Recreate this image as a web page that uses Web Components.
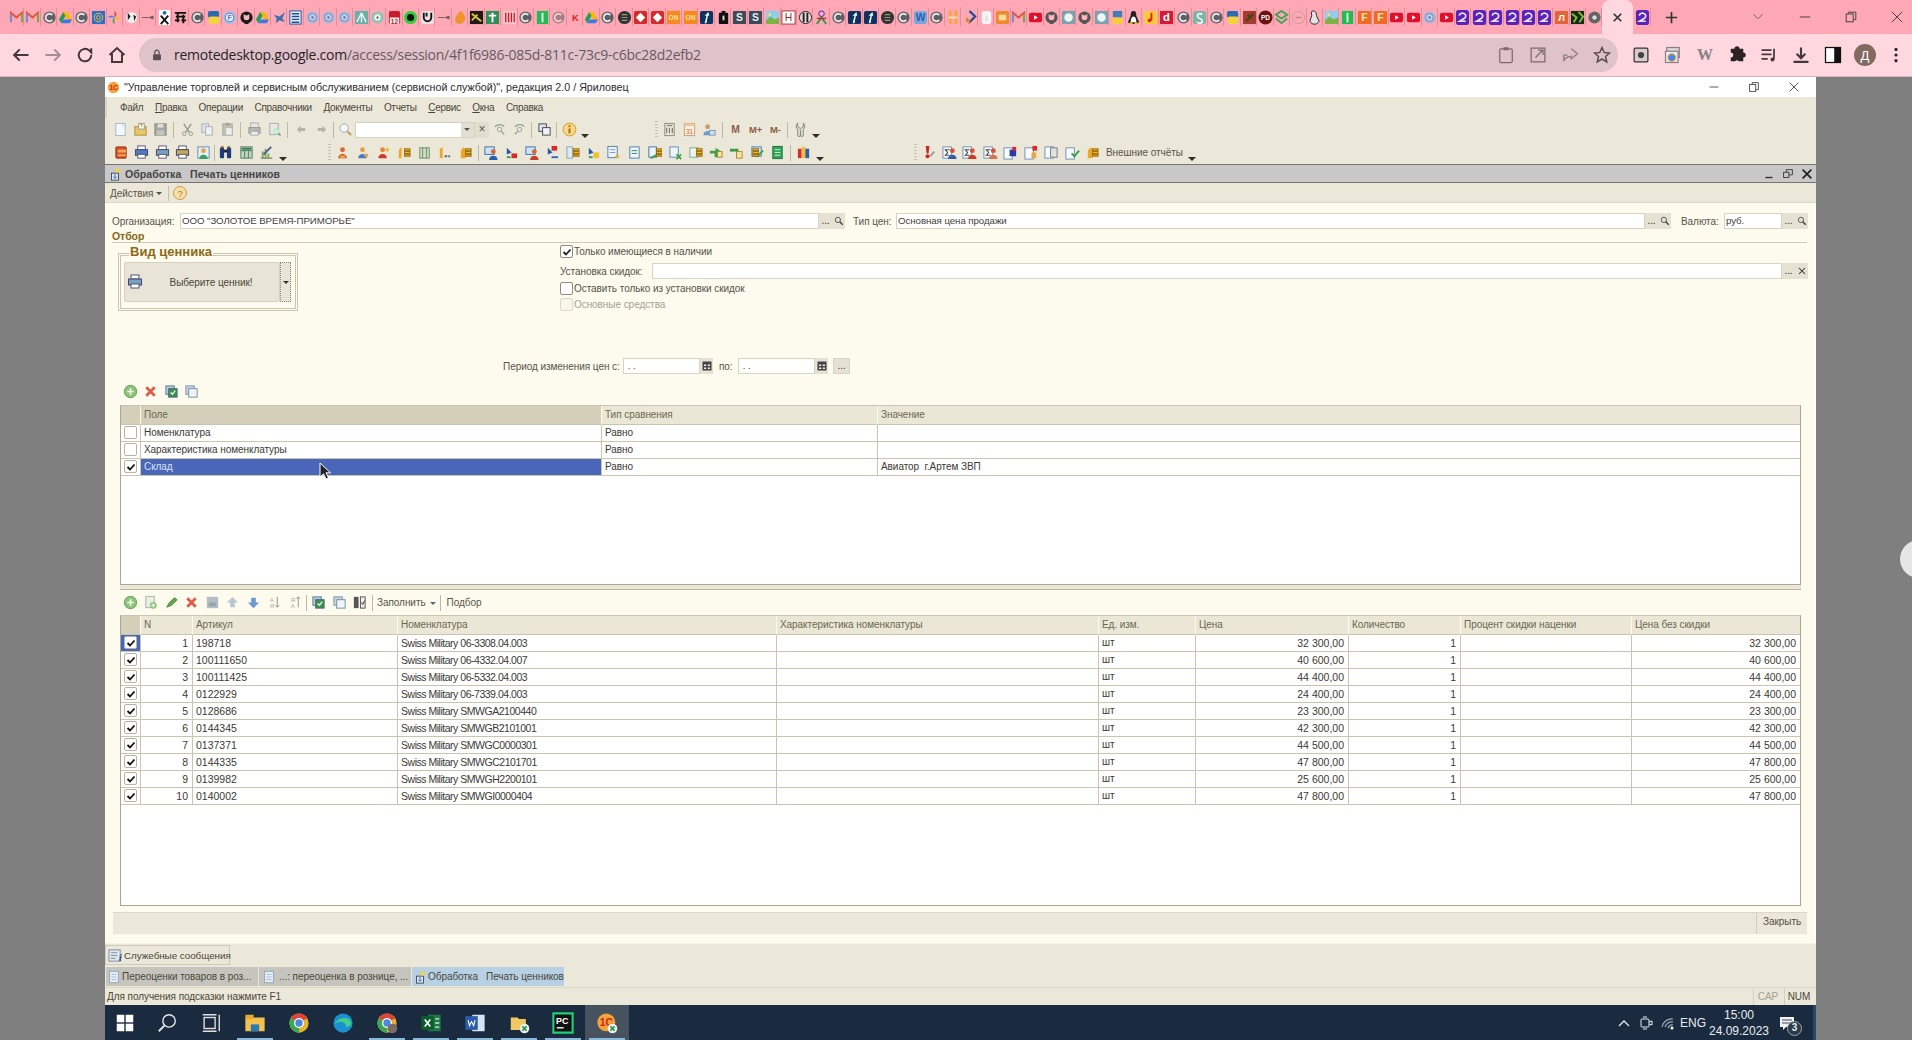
<!doctype html>
<html lang="ru">
<head>
<meta charset="utf-8">
<title>Печать ценников</title>
<style>
  html, body { margin: 0; width: 1912px; height: 1040px; overflow: hidden; background: #7f7f7f; }
  body { display: flex; flex-direction: column; font-family: "Liberation Sans", Arial, sans-serif; }
  remote-screen { flex: 1; min-height: 0; }
</style>
</head>
<body>
<browser-tabs></browser-tabs>
<browser-bar url="remotedesktop.google.com/access/session/4f1f6986-085d-811c-73c9-c6bc28d2efb2"></browser-bar>
<remote-screen>
  <one-app>
    <window-title slot="top" text='"Управление торговлей и сервисным обслуживанием (сервисной службой)", редакция 2.0 / Яриловец'></window-title>
    <one-menubar slot="top" items="Файл,&amp;Правка,Операции,Справочники,Документы,Отчеты,&amp;Сервис,&amp;Окна,Справка"></one-menubar>
    <one-toolbar slot="top" h="23" pad="5" cell="20" items="new open save sep7 cut copy paste sep7 print prev sep7 undo redo sep4 find input xbtn back fwd sep5 wins sep5 info arrow gap62 handle calc cal32 usr sep6 m mp mm sep5 wrench arrow"></one-toolbar>
    <one-toolbar slot="top" h="23" pad="6" items="book pr1 pr2 pr3 frame sep2 bino tbl chart arrow gap37 handle fa fb fc cs1 cs2 cs3 cs4 sep5 dp1 dp2 dp3 dp4 cs5 dp5 doc1 doc2 dp6 dp7 cs6 doc3 doc4 doc5 grn sep5 multi arrow gap87 handle alert sg1 sg2 sg3 sg4 sg5 sg6 sg7 cs4 txt:Внешние_отчёты arrow"></one-toolbar>
    <sub-title slot="top" text="Обработка   Печать ценников"></sub-title>
    <actions-bar slot="top"></actions-bar>

    <price-form>
      <form-row h="16" top="10">
        <one-field label="Организация:" lw="68" w="639" value='ООО "ЗОЛОТОЕ ВРЕМЯ-ПРИМОРЬЕ"' btns="dots,search"></one-field>
        <one-field label="Тип цен:" lw="43" w="749" value="Основная цена продажи" btns="dots,search" style="margin-left:8px"></one-field>
        <one-field label="Валюта:" lw="43" w="58" value="руб." btns="dots,search" style="margin-left:10px"></one-field>
      </form-row>
      <section-head text="Отбор"></section-head>
      <filter-block>
        <price-kind slot="left"></price-kind>
        <one-check slot="right" checked label="Только имеющиеся в наличии" style="height:16px"></one-check>
        <one-field slot="right" label="Установка скидок:" lw="92" w="1130" btns="dots,x" style="height:16px;margin-top:4px"></one-field>
        <one-check slot="right" label="Оставить только из установки скидок" style="height:16px;margin-top:1px"></one-check>
        <one-check slot="right" disabled label="Основные средства" style="height:16px"></one-check>
      </filter-block>
      <form-row h="16" left="391">
        <one-field label="Период изменения цен с:" lw="120" w="77" value=" . ." btns="cal"></one-field>
        <one-field label="по:" lw="19" w="77" value=" . ." btns="cal" style="margin-left:6px"></one-field>
        <one-field w="0" btns="wide" style="margin-left:5px"></one-field>
      </form-row>
      <one-toolbar h="31" pad="7" top="4" items="plus del chk unchk"></one-toolbar>
      <one-grid src="filter" h="180"></one-grid>
      <grid-split></grid-split>
      <one-toolbar h="25" pad="7" top="0" items="plus addc pen del savg up dn az za sep4 chk unchk togl sep4 txt:Заполнить tiny sep6 txt:Подбор"></one-toolbar>
      <one-grid src="goods" h="291"></one-grid>
      <form-footer></form-footer>
    </price-form>

    <one-dock slot="bottom"></one-dock>
    <win-taskbar slot="bottom"></win-taskbar>
  </one-app>
</remote-screen>
<mouse-cursor></mouse-cursor>
<session-handle></session-handle>

<script>
// helpers for small pictures
const r = (x, y, w, h, f, s = 'none', rx = 0) => `<rect x="${x}" y="${y}" width="${w}" height="${h}" fill="${f}" stroke="${s}" rx="${rx}"/>`;
const c = (x, y, rad, f, s = 'none') => `<circle cx="${x}" cy="${y}" r="${rad}" fill="${f}" stroke="${s}"/>`;
const p = (d, f = 'none', s = 'none', w = 1) => `<path d="${d}" fill="${f}" stroke="${s}" stroke-width="${w}"/>`;
const svg = (inner, size = 16, vb = 16) => `<svg width="${size}" height="${size}" viewBox="0 0 ${vb} ${vb}" style="display:block;flex:none">${inner}</svg>`;
const letter = (t, f, size = 11, y = 12, w = 700) => `<text x="8" y="${y}" font-size="${size}" font-weight="${w}" text-anchor="middle" fill="${f}" font-family="Liberation Sans">${t}</text>`;

// favicons of the tab strip
const sq = (bg, fg, t) => r(1, 1, 14, 14, bg, 'none', 1) + letter(t, fg);
const swirl = (o = 1) => `<g opacity="${o}">${c(8, 8, 6.5, '#5c5f63')}${p('M11 5.5A4 4 0 1 0 11 10.5', 'none', '#e6e0e0', 2)}</g>`;
const drive = p('M5.5 2h5l4.5 8h-5z', '#f6b900') + p('M5.5 2 1 10l2.5 4 4.5-8z', '#1f9d55') + p('M3.5 14h9l2.5-4H6z', '#3b78e7');
const gh = (col) => c(8, 8, 6.5, col) + p('M5 4l1.5 1.5h3L11 4v4a3 3 0 0 1-6 0z', '#ffb3bd') + r(6, 11, 4, 4, col);
const ring = c(8, 8, 6.5, '#a6b6da') + c(8, 8, 4, '#c9d4ea', '#6f86be') + c(8, 8, 1.5, '#6f86be');
const tube = r(1, 3, 14, 10, '#e0102a', 'none', 2) + p('M6.5 5.5v5l4-2.5z', '#fff');
const purple = r(1, 0, 14, 16, '#5a22b8', 'none', 3) + p('M4.5 6a3.5 3 0 1 1 6 2.5L5 12h6.5', 'none', '#e9e2ff', 1.8);
const burst = r(1, 1, 14, 14, '#7aa3ad') + c(8, 8, 4.5, '#eef6f6');
const FAV = {
  g: p('M2 13V3l6 5 6-5v10', 'none', '#e8503a', 2) + p('M2 13V4', 'none', '#6f8fe0', 2) + p('M14 13V4', 'none', '#6ab04c', 2),
  c: swirl(), cl: swirl(.55), d: drive,
  at: r(1, 1, 14, 14, '#2f6fc4') + c(8, 8, 4.5, 'none', '#f2c230') + c(8, 8, 2, 'none', '#f2c230'),
  pw: p('M8 8V1a4 4 0 0 1 0 7', '#ea4335') + p('M8 8h7a4 4 0 0 1-7 0', '#fbbc05') + p('M8 8v7a4 4 0 0 1 0-7', '#34a853') + p('M8 8H1a4 4 0 0 1 7 0', '#4285f4'),
  cow: c(8, 8, 6, '#eee') + p('M4 3l3 4-3 4zM10 5l3 2-2 5z', '#222'),
  dash: p('M2 8h8l4-1.5v3L10 8', '#7d5d57', '#7d5d57'),
  x: r(2, 0, 12, 16, '#fff') + p('M4 6l8 9M12 6l-8 9', 'none', '#111', 2) + c(8, 3, 2, '#2a62b8'),
  se: p('M2 3h12M3 7h10M2 11h5M9 11h5M5 3v10M11 5v9', 'none', '#111', 2),
  py: r(2, 1, 12, 7, '#2c6bb0', 'none', 2) + r(3, 7, 11, 8, '#f5d33c', 'none', 2),
  fb: c(8, 8, 7, '#a9bde4') + c(8, 8, 4.6, '#eaf0fb', '#4f73c2') + letter('F', '#4f73c2', 7, 10.5),
  gh: gh('#1a1a1a'), gx: gh('#555'),
  bird: p('M2 5l6 2 6-5-3 7 3 4-6-2-4 3 1-5z', '#3c6fb0'),
  st: r(2, 1, 12, 14, '#e9eef7', '#1c4f9c') + p('M4 4h8M4 7h8M4 10h8M4 13h8', 'none', '#1c4f9c', 1.5),
  lb: ring,
  shell: r(1, 1, 14, 14, '#68b0a5') + p('M8 3 3 13M8 3v10M8 3l5 10', 'none', '#e8f5f2', 1.5),
  gg: c(8, 8, 6.5, '#8ec3b3') + c(8, 8, 3.5, '#eee') + c(8, 8, 1, '#333'),
  r12: r(2, 1, 12, 14, '#c81e2c', 'none', 2) + r(3, 8, 10, 7, '#eee') + letter('12', '#c81e2c', 7, 14.5),
  gb: c(8, 8, 7, '#31d03a') + c(8, 8, 3.8, '#111'),
  u: r(1, 1, 14, 14, '#f0dfe0', 'none', 3) + p('M4 3v5a4 4 0 0 0 8 0V3M7 3v4', 'none', '#111', 2),
  ob: p('M8 1c5 3 6 8 4 11s-7 4-9 1 1-9 5-12z', '#f0932b'),
  by: r(1, 1, 14, 14, '#1c1a16') + p('M3 4l10 8M3 11l6-6', 'none', '#e6c13c', 2),
  gc: r(1, 1, 14, 14, '#2f8f57') + p('M8 3v10M4 6h8', 'none', '#fff', 2),
  r10: r(1, 1, 14, 14, '#ffc4ca') + p('M4 3v10M7 3v10M10 3v10M13 3v10', 'none', '#b9202b', 1.4),
  gbar: r(2, 1, 12, 14, '#22bb55') + r(7, 3, 2, 10, '#e8ffe8'),
  k: letter('K', '#d8202c', 10, 12),
  br: c(8, 8, 7, '#333') + p('M5 5h6M5 8h6M5 11h6', 'none', '#8f9a72', 1.3),
  rd: r(1, 1, 14, 14, '#d32b2b', 'none', 2) + p('M8 3l5 5-5 5-5-5z', '#fff'),
  on: r(1, 1, 14, 14, '#f68a1e') + letter('ON', '#ffe1a8', 7, 10.5),
  fu: r(1, 1, 14, 14, '#14305f', 'none', 2) + p('M6 14l2-8H6l4-4 1 4H9.5L8 14z', '#dff'),
  bat: r(3, 3, 10, 12, '#111', 'none', 1) + r(6, 1, 4, 3, '#111') + r(7, 6, 2, 5, '#ddd'),
  s: sq('#3c4a59', '#e8e8e8', 'S'),
  img: r(1, 1, 14, 14, '#8ecdf0') + p('M1 11l5-4 4 3 5-2v7H1z', '#7cb342') + c(5, 5, 1.5, '#ffe066'),
  h: r(1, 1, 14, 14, '#fff', '#a83232') + letter('H', '#a01f2a', 11, 12, 400),
  wr: c(8, 8, 6.5, '#e4d8da', '#222') + p('M6 3v10M10 3v10', 'none', '#222', 2),
  per: c(8, 4, 3, 'none', '#2a2ab8') + p('M3 15l5-7 5 7', 'none', '#1e9e4a', 2) + p('M3 9h10', 'none', '#d8202c', 1.5),
  wb: r(1, 1, 14, 14, '#79a7dd', 'none', 3) + letter('W', '#2c5fa8', 11, 12),
  ol: r(3, 1, 3, 14, '#f9a33c') + r(9, 1, 3, 14, '#f9a33c') + r(3, 7, 9, 2, '#ffe2bd'),
  dia: p('M8 1l6 6-6 6-3-3', 'none', '#1d4f8f', 2.4) + p('M5 8l3 6', 'none', '#f08a24', 2.4),
  wi: r(3, 1, 10, 14, '#f6f4f4', 'none', 3) + r(7, 6, 2, 6, '#ddd'),
  os: r(1, 1, 14, 14, '#ee8a2a', 'none', 2) + r(4, 5, 8, 6, '#ffd7a0'),
  yt: tube, tb: burst,
  py2: r(3, 1, 10, 7, '#3f7dbb') + r(3, 8, 10, 7, '#f4cd3a'),
  lx: p('M8 1c3 0 3 3 3 5l3 7-3 2H5l-3-2 3-7c0-2 0-5 3-5z', '#222') + p('M8 7c2 0 3 3 3 6H5c0-3 1-6 3-6z', '#fff') + r(4, 13, 3, 2, '#f0b429') + r(9, 13, 3, 2, '#f0b429'),
  nt: r(1, 1, 14, 14, '#ffc933', 'none', 3) + p('M9 3v8', 'none', '#d8202c', 2) + c(7, 11, 2, '#d8202c'),
  dr: r(1, 1, 14, 14, '#d31c34') + letter('d', '#fff', 12),
  gs: r(1, 1, 14, 14, '#7fb3a5', 'none', 3) + p('M11 5C9 3 5 4 6 7s5 2 5 5-4 2-6 1', 'none', '#eefaf5', 1.7),
  dk: r(1, 1, 14, 14, '#a33b30') + p('M4 12l8-8M6 5l4 4', 'none', '#441', 2),
  pdf: c(8, 8, 7.5, '#6d1111') + letter('PD', '#fff', 7, 10.5),
  gl: p('M8 1l6 4-6 4-6-4z', 'none', '#3aa655', 2) + p('M2 9l6 5 6-5', 'none', '#3aa655', 2),
  cd: c(8, 8, 6.5, 'none', '#c99') + p('M5 8h6', 'none', '#b88', 1.5),
  pg: p('M6 1c4 0 4 3 4 5l3 6-3 3H6L3 12l2-6c0-2-1-5 1-5z', '#e6e3e3', '#222'),
  f: r(1, 1, 14, 14, '#f16a1f', 'none', 1) + letter('F', '#ffe2c4'),
  p: purple,
  l: r(1, 1, 14, 14, '#e2653a', 'none', 1) + letter('Л', '#ffe', 10),
  gk: r(1, 1, 14, 14, '#1b2a12') + p('M2 4l5 4-3 5M9 2l5 5-4 6', 'none', '#7bc043', 2),
  chr: c(8, 8, 6.5, '#666') + c(8, 8, 3, '#ddd', '#444')
};
const TAB_ICONS = ('g g c d c at pw cow dash x se c py fb gh d bird st lb lb lb shell gg r12 gb u dash ob by gc r10 c gbar cl k d c br ' +
  'rd rd on on fu bat s s img h wr per c fu fu br c wb c ol dia wi os g yt gx tb gx tb py2 lx nt dr c gs c py dk pdf ' +
  'gl cd pg img gbar f f yt yt lb yt p p p p p p l gk chr').split(' ');

// 1C toolbar pictures
const person = (hd, body, x = 8, y = 5) => c(x, y, 2.6, hd) + p(`M${x - 4.5} ${y + 9}c0-6 9-6 9 0z`, body);
const coins = (x = 9) => r(x, 10, 6, 2, '#e0a51d', '#9c6d0c') + r(x, 7, 6, 2, '#f0bd35', '#9c6d0c') + r(x, 4, 6, 2, '#f0bd35', '#9c6d0c');
const paper = (x = 2, y = 1) => r(x, y, 9, 12, '#f8fbff', '#6f8fb8');
const sigma = (col) => paper(1, 2) + p('M8 5H3.5L6 8l-2.5 3H8', 'none', '#444', 1.1) + person('#d8503a', col, 11, 6);
const printer = (bd) => r(4, 1, 8, 4, '#fff', '#557') + r(1.5, 5, 13, 6, bd, '#446') + r(4, 10, 8, 4, '#fff', '#557');
const TB = {
  new: r(3, 1.5, 10, 13, '#f4f8fc', '#a3b5c4') + p('M10 1.5l3 3h-3z', '#cfdbe6'),
  open: r(2, 5, 12, 9, '#e9c86a', '#b08a2c') + r(6, 1.5, 6, 6, '#fff', '#999') + p('M9 5V2m-1.5 1.5L9 2l1.5 1.5', 'none', '#c9962a'),
  save: r(2, 2, 12, 12, '#a8a8a2', '#88887f') + r(5, 2, 6, 4, '#dedfd8') + r(4, 9, 8, 5, '#c4c4be'),
  cut: p('M4 2l6 9M12 2l-6 9', 'none', '#9a9a94', 1.6) + c(4.5, 12.5, 2, 'none', '#9a9a94') + c(11.5, 12.5, 2, 'none', '#9a9a94'),
  copy: r(2, 2, 7, 9, '#dfe6ea', '#a5adb3') + r(6, 5, 7, 9, '#eef2f4', '#a5adb3'),
  paste: r(3, 2, 10, 12, '#c6c4b8', '#a5a398') + r(6, 1, 4, 3, '#a5a398') + r(6, 6, 7, 8, '#eef0ee', '#b5b5ae'),
  print: r(4, 1, 8, 5, '#e8e8e4', '#aaa') + r(2, 6, 12, 6, '#b8b8b2', '#999') + r(4, 10, 8, 4, '#eee', '#aaa'),
  prev: r(3, 1.5, 9, 12, '#e9e9e6', '#aaa') + c(10, 10, 3, '#d9e6ee', '#8ea') + p('M12 12l2.5 2.5', 'none', '#888', 1.5),
  undo: p('M3 8l4-4v2.5h5v3H7V12z', '#b7b4a6'), redo: p('M13 8L9 4v2.5H4v3h5V12z', '#b7b4a6'),
  find: c(6.5, 6.5, 4.5, '#f2f6f8', '#9aa') + p('M10 10l4 4', 'none', '#c09a5a', 2),
  back: p('M3 5c3-3 8-3 10 0', 'none', '#8fa39a', 1.4) + c(8, 8, 2.4, 'none', '#8fa39a') + p('M10 10l3 3', 'none', '#8fa39a', 1.4),
  fwd: p('M3 5c3-3 8-3 10 0', 'none', '#8fa39a', 1.4) + c(8, 8, 2.4, 'none', '#8fa39a') + p('M6 10l-3 3', 'none', '#8fa39a', 1.4),
  wins: r(2, 2, 8, 8, '#dce5f0', '#445') + r(6, 6, 8, 8, '#eef3f8', '#445'),
  info: c(8, 8, 6.8, '#f6d989', '#d39a2c') + r(7, 7, 2, 5, '#a8650f') + r(7, 3.5, 2, 2, '#a8650f'),
  calc: r(3, 1.5, 10, 13, '#eee9d8', '#8a8a78') + p('M5 6v6M8 6v6M11 6v6', 'none', '#777', 1.2) + r(5, 3, 6, 1.5, '#888'),
  cal32: r(2.5, 1.5, 11, 13, '#fbf1e2', '#c99c66') + r(2.5, 1.5, 11, 3, '#e9c9a5') + `<text x="8" y="12.5" font-size="7" text-anchor="middle" fill="#c8642a" font-family="Liberation Sans">31</text>`,
  usr: person('#c7a06a', '#6a9cc8', 6, 5) + r(8, 9, 6, 5, '#cfe0ee', '#7a96b3'),
  m: letter('M', '#8d5d45', 11, 12), mp: letter('M+', '#8d5d45', 10, 12), mm: letter('M-', '#8d5d45', 10, 12),
  wrench: p('M5 1v4l3 2 3-2V1c2 2 2 5 0 7v6a1.5 1.5 0 0 1-3 0h0V9H8v5a1.5 1.5 0 0 1-3 0V8C3 6 3 3 5 1z', '#dcdcd0', '#888878'),
  book: r(2, 2, 11, 12, '#d9522b', '#8e2b12', 1) + r(4, 5, 9, 3, '#f2a65a') + r(4, 10, 9, 2, '#f2a65a'),
  pr1: printer('#4f7ac4'), pr2: printer('#7aa0c0'), pr3: printer('#c9a45a'),
  frame: r(2, 2, 12, 12, '#e7eff7', '#6a8db5') + person('#e6a04c', '#39a06b', 8, 6),
  bino: r(2, 3, 4.5, 11, '#1f3b78', 'none', 1) + r(9.5, 3, 4.5, 11, '#1f3b78', 'none', 1) + r(6, 5, 4, 3, '#223') + r(3, 1.5, 3, 2, '#7a4c2a') + r(10, 1.5, 3, 2, '#7a4c2a'),
  tbl: r(2, 2, 12, 12, '#bcd9c2', '#4d7a5d') + p('M2 6h12M6 6v8M10 6v8', 'none', '#4d7a5d') + r(3, 3, 10, 2, '#397c52'),
  chart: p('M2 14h12', 'none', '#555') + p('M4 14V7M7 14V4M10 14V9', 'none', '#7fa65a', 2) + p('M5 10l8-8', 'none', '#4a5a9a', 2),
  fa: person('#d8682f', '#d13a2a') + r(5, 11, 6, 3, '#e5a640'),
  fb: person('#e6a040', '#4a7ac0') + c(12, 11, 2, '#e5a640'),
  fc: person('#e58a2f', '#d13a2a', 7, 5) + c(12, 5, 2, '#f0bd35'),
  cs1: p('M3 14V5l3-3v12z', '#eea724') + coins(), cs2: r(3, 3, 10, 11, '#cfe0c8', '#6c8a60') + p('M6 3v11M10 3v11', 'none', '#6c8a60'),
  cs3: p('M3 14V4l3-2v12z', '#eea724') + r(8, 11, 3, 2, '#667') + r(12, 11, 2, 2, '#667'),
  cs4: p('M3 14V6l3-4 2 3v9z', '#eea724') + coins(8),
  cs5: r(2, 2, 6, 12, '#dfe8f0', '#8aa') + coins(),
  cs6: r(2, 3, 9, 10, '#eef4e8', '#7a9') + coins(),
  dp1: r(2, 2, 10, 8, '#cfe3f6', '#3c70b0') + person('#d8682f', '#2a5fb0', 11, 7),
  dp2: p('M3 3l5 5-5 2z', '#2458a8') + r(8, 9, 6, 5, '#d42b2b') + p('M3 13h4', 'none', '#3a9a4a', 2),
  dp3: r(2, 2, 10, 8, '#cfe3f6', '#3c70b0') + person('#d8682f', '#c8402a', 11, 7),
  dp4: r(7, 1, 6, 5, '#d42b2b') + p('M3 3l5 5-5 2z', '#2458a8') + p('M7 13h7', 'none', '#3a60c0', 2),
  dp5: p('M3 3l5 5-5 2z', '#2458a8') + r(8, 8, 6, 6, '#f2c12e') + p('M3 13h4', 'none', '#3a9a4a', 2),
  dp6: r(2, 2, 8, 11, '#eef4fa', '#3c70b0') + p('M4 14l9-5', 'none', '#3aa04a', 2) + coins(10),
  dp7: r(2, 2, 9, 11, '#eef4fa', '#5a8cc0') + p('M9 10l5 5M14 10l-5 5', 'none', '#3aa04a', 1.8),
  doc1: r(2, 1.5, 10, 12, '#eef4fa', '#4d80b5') + p('M4 5h6M4 8h6', 'none', '#7a9bc0') + c(12, 12, 2, '#ddb23a'),
  doc2: r(3, 2, 10, 12, '#eef4fa', '#4d80b5') + p('M5 6h6M5 9h6', 'none', '#2a8a4a'),
  doc3: p('M1 6h6V3l6 4v6H6V9H1z', '#3aa04a') + r(9, 7, 5, 6, '#f4e4a4', '#b08a2c'),
  doc4: p('M1 4h9v3H1z', '#3a9a4a') + r(8, 7, 6, 7, '#f4e4a4', '#b08a2c'),
  doc5: r(2, 2, 10, 10, '#cfe3f6', '#4d80b5') + p('M5 9l3 3 6-6', 'none', '#3aa04a', 1.8) + coins(3),
  grn: r(3, 1.5, 10, 13, '#35a55a', '#1c6f3b') + p('M5 5h6M5 8h6M5 11h6', 'none', '#bff0cf'),
  multi: r(2, 4, 4, 10, '#d42b2b') + r(6, 2, 4, 12, '#f0bd35') + r(10, 4, 4, 10, '#2c5fa8'),
  alert: p('M5 1h4l-1 8H6z', '#c62a22') + c(7, 12, 2.2, '#c62a22') + p('M10 12l4-5', 'none', '#999', 2),
  sg1: sigma('#2c5fa8'), sg2: sigma('#c8402a'), sg3: sigma('#d8744a'),
  sg4: paper(1, 3) + r(7, 5, 7, 7, '#2c3aa8') + r(10, 2, 4, 4, '#d42b2b'),
  sg5: paper(1, 3) + r(9, 1, 5, 5, '#d42b2b') + r(8, 8, 5, 6, '#e5a640'),
  sg6: paper(1, 2) + r(7, 3, 7, 10, '#dde5dd', '#778'),
  sg7: paper(1, 3) + p('M7 9l3 3 5-6', 'none', '#3aa04a', 2),
  plus: c(8, 8, 6.6, '#8cc47a', '#6a9c5b') + p('M8 4.5v7M4.5 8h7', 'none', '#eefae8', 1.8),
  del: p('M3.5 3.5l9 9M12.5 3.5l-9 9', 'none', '#e05a48', 3),
  chk: r(2, 2, 9, 9, '#b9c9d6', '#5b7a94') + r(5, 5, 9, 9, '#3f8f4f', '#3d6a80') + p('M7 9l2 2 3-4', 'none', '#eaf7e8', 1.4),
  unchk: r(2, 2, 9, 9, '#c6d2dc', '#7e97ab') + r(5, 5, 9, 9, '#f0f5f8', '#6f8ea6'),
  addc: r(3, 1.5, 9, 12, '#e9eee9', '#a8b4a8') + c(11, 11, 3.6, '#8cc47a') + p('M11 9v4M9 11h4', 'none', '#fff', 1.2),
  pen: p('M3 13l2-4 6-6 3 2-6 6z', '#67a64f', '#4d853c'),
  savg: r(2, 2, 12, 12, '#b4bcc4') + r(4, 8, 8, 4, '#9aa4ae'),
  up: p('M8 2l6 6h-3.5v5h-5V8H2z', '#b6c6d2'), dn: p('M8 14l6-6h-3.5V3h-5v5H2z', '#6d9ad0'),
  az: `<text x="4" y="7" font-size="6.5" fill="#a4a8a8" font-family="Liberation Sans">A</text><text x="4" y="14" font-size="6.5" fill="#a4a8a8" font-family="Liberation Sans">Я</text>` + p('M12 2v11m-2-2l2 2 2-2', 'none', '#8a8e8e'),
  za: `<text x="4" y="7" font-size="6.5" fill="#a4a8a8" font-family="Liberation Sans">Я</text><text x="4" y="14" font-size="6.5" fill="#a4a8a8" font-family="Liberation Sans">A</text>` + p('M12 13V2m-2 2l2-2 2 2', 'none', '#8a8e8e'),
  togl: r(2, 2, 5, 12, '#555') + r(9, 2, 5, 12, '#eee', '#555') + p('M10 8l1.5 2 2-4', 'none', '#222')
};

class BrowserTabs extends HTMLElement {
  connectedCallback() {
    const root = this.attachShadow({ mode: 'open' });
    const cell = n => `<span class="fav">${svg(FAV[n], 15)}</span>`;
    root.innerHTML = `
      <style>
        :host { display: flex; height: 34px; background: #ffa8b5; padding-left: 8px; align-items: center; flex: none; }
        .fav { width: 16.45px; flex: none; height: 18px; display: flex; align-items: center; justify-content: center; box-shadow: inset -1px 0 #e08d9c; }
        .active { width: 31px; flex: none; height: 34px; background: #ffd7df; border-radius: 8px 8px 0 0; display: flex; align-items: center; justify-content: center; align-self: stretch; margin-top: 0; }
        .plus { margin-left: 6px; width: 30px; display: flex; justify-content: center; }
        .ctl { display: flex; justify-content: center; width: 46px; flex: none; }
        .close { width: 38px; justify-content: flex-start; padding-left: 16px; box-sizing: border-box; }
      </style>
      ${TAB_ICONS.map(cell).join('')}
      <span class="active">${svg(p('M4 4l8 8M12 4l-8 8', 'none', '#333', 1.8), 15)}</span>
      <span class="fav" style="margin-left:1px">${svg(FAV.p, 15)}</span>
      <span class="plus">${svg(p('M8 2v12M2 8h12', 'none', '#333', 1.8), 15)}</span>
      <span class="ctl" style="margin-left:auto;width:40px;margin-right:4px">${svg(p('M3 5l5 5 5-5', 'none', '#555', 1), 14)}</span>
      <span class="ctl">${svg(p('M2 8h12', 'none', '#333', 1), 14)}</span>
      <span class="ctl">${svg(r(2.5, 4.5, 8, 9, 'none', '#333') + p('M5 4V2.5h8.5V11H11', 'none', '#333'), 14)}</span>
      <span class="ctl close">${svg(p('M2 2l12 12M14 2L2 14', 'none', '#333', 1), 14)}</span>`;
  }
}

class BrowserBar extends HTMLElement {
  connectedCallback() {
    const url = this.getAttribute('url');
    const [host, ...rest] = url.split('/');
    const btn = (inner) => `<span class="btn">${svg(inner, 20)}</span>`;
    const st = '#44383c';
    const root = this.attachShadow({ mode: 'open' });
    root.innerHTML = `
      <style>
        :host { display: flex; align-items: center; height: 43px; box-sizing: border-box; flex: none; background: #ffd7df; padding-left: 5px; border-bottom: 1px solid #d8b6be; }
        .btn { width: 32px; flex: none; display: flex; justify-content: center; align-items: center; }
        .pill { width: 1479px; margin: 0 7px 0 6px; box-sizing: border-box; height: 34px; margin-top: -1px; border-radius: 17px; background: #e0c3ca; display: flex; align-items: center; padding-left: 11px; flex: none; }
        .lock { width: 24px; flex: none; }
        .url { font: 14px "Open Sans", "Noto Sans", sans-serif; color: #6a5a60; letter-spacing: -.26px; flex: 1; white-space: nowrap; }
        .url b { font-weight: 400; color: #2b2225; }
        .ava { width: 22px; height: 22px; border-radius: 50%; background: #836a60; color: #fff; font: 13px "Liberation Sans", sans-serif; display: flex; align-items: center; justify-content: center; }
      </style>
      ${btn(p('M14 8H3M7 3.5 2.5 8 7 12.5', 'none', st, 1.6))}
      ${btn(p('M2 8h11M9 3.5 13.5 8 9 12.5', 'none', '#a28f96', 1.6))}
      ${btn(p('M13 8a5 5 0 1 1-1.5-3.5L13 6V2.5', 'none', st, 1.6))}
      ${btn(p('M2 8l6-5.5L14 8M4 7v6.5h8V7', 'none', st, 1.6))}
      <div class="pill">
        <span class="lock">${svg(r(3.5, 7, 9, 7, '#5b4f53', 'none', 1) + p('M5.5 7V5a2.5 2.5 0 0 1 5 0v2', 'none', '#5b4f53', 1.4), 14)}</span>
        <span class="url"><b>${host}</b>/${rest.join('/')}</span>
        ${btn(r(3, 3, 10, 11, 'none', '#7a6a70', 1) + r(6, 1.8, 4, 2.4, '#7a6a70') )}
        ${btn(r(2.5, 2.5, 11, 11, 'none', '#7a6a70') + p('M6 10l6-6M8 4h4v4', 'none', '#7a6a70'))}
        ${btn(p('M3 13V8h3M9 3l5 4-5 4V9C6 9 4 10 3 13', 'none', '#8d7d83'))}
        ${btn(p('M8 2l1.8 4 4.2.4-3.2 2.8 1 4.3L8 11.2 4.2 13.500l1-4.300L2 6.400 6.200 6z', 'none', '#5b4f53', 1.2))}
      </div>
      ${btn(r(2.5, 2.5, 11, 11, '#d8cccc', '#333', 1) + c(8, 8, 2.5, '#444'))}
      ${btn(r(3, 2, 10, 8, '#dcd6dc', '#8a7f88') + r(2, 5, 10, 9, '#eee', '#8a7f88') + c(7, 10, 3, '#4285f4', '#e0a040'))}
      <span class="btn" style="font:700 16px 'Liberation Serif',serif;color:#8b7f83">W</span>
      ${btn(p('M6 3a2 2 0 0 1 4 0h3v3a2 2 0 0 1 0 4v3H9.500a2 2 0 0 0-3 0H3v-3a2 2 0 0 0 0-4V3z', '#2b2225'))}
      ${btn(p('M2 4h8M2 7.500h8M2 11h5', 'none', st, 1.4) + p('M12 3v8', 'none', st, 1.4) + c(10.8, 11.5, 1.6, st))}
      ${btn(p('M8 2v8M4.500 7 8 10.500 11.500 7M2 13.500h12', 'none', st, 1.7))}
      ${btn(r(2.5, 2.5, 11, 11, 'none', '#111', 0) + r(2, 2, 7, 12, '#fff') + r(9, 2, 5, 12, '#111') + r(2, 2, 12, 12, 'none', '#111'))}
      <span class="btn"><span class="ava">Д</span></span>
      <span class="btn" style="width:30px">${svg(c(8, 3, 1.4, '#2b2225') + c(8, 8, 1.4, '#2b2225') + c(8, 13, 1.4, '#2b2225'), 18)}</span>`;
  }
}

class RemoteScreen extends HTMLElement {
  connectedCallback() {
    this.attachShadow({ mode: 'open' }).innerHTML = `
      <style>:host { display: block; box-sizing: border-box; padding: 0 96px 0 105px; }</style>
      <slot></slot>`;
  }
}

class OneApp extends HTMLElement {
  connectedCallback() {
    this.attachShadow({ mode: 'open' }).innerHTML = `
      <style>
        :host { display: flex; flex-direction: column; height: 963px; background: #ebe7d9; color: #3d3a30; font: 10px "Liberation Sans", Arial, sans-serif; letter-spacing: -.06px; }
        .main { flex: 1; min-height: 0; display: flex; flex-direction: column; }
      </style>
      <slot name="top"></slot>
      <div class="main"><slot></slot></div>
      <slot name="bottom"></slot>`;
  }
}

class WindowTitle extends HTMLElement {
  connectedCallback() {
    const logo = c(8, 8, 7, '#f2a33a') + `<text x="8" y="11" font-size="8" font-weight="700" text-anchor="middle" fill="#c8261e" font-family="Liberation Sans">1С</text>`;
    this.attachShadow({ mode: 'open' }).innerHTML = `
      <style>
        :host { display: flex; align-items: center; height: 20px; background: #fff; padding-left: 2px; color: #2c2c2c; }
        .t { font-size: 10.7px; letter-spacing: 0; margin-left: 4px; white-space: nowrap; flex: 1; }
        .b { width: 40px; display: flex; justify-content: center; flex: none; }
      </style>
      ${svg(logo, 13)}
      <span class="t">${this.getAttribute('text')}</span>
      <span class="b">${svg(p('M3 8h10', 'none', '#444'), 14)}</span>
      <span class="b">${svg(r(3, 5, 7, 8, 'none', '#444') + p('M6 5V3h7v8h-3', 'none', '#444'), 14)}</span>
      <span class="b" style="margin-right:2px">${svg(p('M3 3l10 10M13 3L3 13', 'none', '#444'), 14)}</span>`;
  }
}

class OneMenubar extends HTMLElement {
  connectedCallback() {
    const items = this.getAttribute('items').split(',').map(s => {
      const u = s.startsWith('&');
      const t = s.replace('&', '');
      return `<span>${u ? `<u>${t[0]}</u>${t.slice(1)}` : t}</span>`;
    }).join('');
    this.attachShadow({ mode: 'open' }).innerHTML = `
      <style>
        :host { display: flex; align-items: center; height: 21px; padding-left: 15px; gap: 11.6px; background: #ebe7d9; color: #4b473a; white-space: nowrap; letter-spacing: -.3px; box-shadow: inset 6px 0 0 -4px #d8d4c4; }
      </style>${items}`;
  }
}

class OneToolbar extends HTMLElement {
  connectedCallback() {
    const top = this.getAttribute('top');
    const inForm = top !== null;
    const cellW = this.getAttribute('cell') || 20.5;
    const cells = this.getAttribute('items').split(' ').map(t => {
      if (t.startsWith('sep')) return `<i class="sep" style="width:${t.slice(3)}px"></i>`;
      if (t.startsWith('gap')) return `<i style="width:${t.slice(3)}px;flex:none"></i>`;
      if (t.startsWith('txt:')) return `<span class="txt">${t.slice(4).replace('_', ' ')}</span>`;
      if (t === 'handle') return `<i class="handle"></i>`;
      if (t === 'arrow') return `<span class="arrow"></span>`;
      if (t === 'tiny') return `<span class="tiny"></span>`;
      if (t === 'input') return `<span class="input"><span class="dd"></span></span>`;
      if (t === 'xbtn') return `<span class="xb">×</span>`;
      return `<span class="ic">${svg(TB[t] || '', 15)}</span>`;
    }).join('');
    this.attachShadow({ mode: 'open' }).innerHTML = `
      <style>
        :host { display: flex; align-items: center; height: ${this.getAttribute('h')}px; padding-left: ${this.getAttribute('pad')}px; flex: none; box-sizing: border-box; padding-top: ${top || 0}px; background: ${inForm ? 'transparent' : '#ebe7d9'}; }
        .ic { width: ${cellW}px; flex: none; display: flex; justify-content: center; align-items: center; }
        .sep { flex: none; height: 16px; background: linear-gradient(#bdb9a8, #bdb9a8) center / 1px 100% no-repeat; }
        .handle { width: 6px; height: 18px; flex: none; background: repeating-linear-gradient(#c6c2b2 0 1px, transparent 1px 3px) center / 3px 100% no-repeat; }
        .arrow { width: 12px; height: 16px; flex: none; position: relative; }
        .arrow::after { content: ""; position: absolute; left: 2px; bottom: 0; border: 4px solid transparent; border-top-color: #2e2e28; border-bottom: 0; }
        .tiny { flex: none; margin: 1px 2px 0 1px; border: 3px solid transparent; border-top: 3.5px solid #666; border-bottom: 0; }
        .input { width: 120px; height: 16px; flex: none; box-sizing: border-box; background: #fff; border: 1px solid #d6d2c2; position: relative; }
        .dd { position: absolute; right: 0; top: 0; width: 13px; height: 14px; background: #e3dfd0; }
        .dd::after { content: ""; position: absolute; left: 3px; top: 5px; border: 3.5px solid transparent; border-top-color: #555; border-bottom: 0; }
        .xb { width: 14px; height: 16px; flex: none; background: #e3dfd0; color: #555; text-align: center; line-height: 15px; font-size: 12px; }
        .txt { flex: none; padding: 0 3px; color: #5a5648; white-space: nowrap; }
      </style>${cells}`;
  }
}

class SubTitle extends HTMLElement {
  connectedCallback() {
    const ico = r(4, 7, 8, 8, '#dde6ee', '#345') + p('M8 8v5M6 11l2 2 2-2', 'none', '#2a5fb0') + c(11, 4, 2.5, '#f6d23c');
    this.attachShadow({ mode: 'open' }).innerHTML = `
      <style>
        :host { display: flex; align-items: center; height: 19px; box-sizing: border-box; background: #c8c8c8; border-top: 1px solid #77776d; border-bottom: 1px solid #77776d; padding-left: 3px; color: #2f2f2f; }
        .t { margin-left: 3px; font-size: 10.6px; letter-spacing: 0; font-weight: 700; white-space: pre; flex: 1; opacity: .85; }
        .b { width: 19px; flex: none; display: flex; justify-content: center; }
      </style>
      ${svg(ico, 14)}
      <span class="t">${this.getAttribute('text')}</span>
      <span class="b">${svg(p('M4 12h8', 'none', '#333', 1.6), 14)}</span>
      <span class="b">${svg(r(3, 6, 6, 6, 'none', '#333') + p('M6 6V3h7v6h-4', 'none', '#333'), 14)}</span>
      <span class="b" style="margin-right:0">${svg(p('M3 3l10 10M13 3L3 13', 'none', '#222', 2), 14)}</span>`;
  }
}

class ActionsBar extends HTMLElement {
  connectedCallback() {
    const help = c(8, 8, 6.5, '#f3e0ae', '#d69a38') + `<text x="8" y="11.500" font-size="9.500" text-anchor="middle" fill="#c07820" font-family="Liberation Sans">?</text>`;
    this.attachShadow({ mode: 'open' }).innerHTML = `
      <style>
        :host { display: flex; align-items: center; height: 20px; padding: 1px 0 0 5px; background: #ebe7d9; color: #5a5648; border-bottom: 1px solid #dcd8c6; box-sizing: border-box; }
        .dd { margin: 1px 6px 0 3px; border: 3px solid transparent; border-top: 3.5px solid #555; border-bottom: 0; }
        .sep { width: 1px; height: 15px; background: #c6c2b0; margin-right: 3px; }
      </style>
      <span>Действия</span><i class="dd"></i><i class="sep"></i>${svg(help, 16)}`;
  }
}

class PriceForm extends HTMLElement {
  connectedCallback() {
    this.attachShadow({ mode: 'open' }).innerHTML = `
      <style>
        :host { display: flex; flex-direction: column; flex: 1; min-height: 0; background: #fdfbee; padding: 0 9px 0 8px; box-shadow: inset -1px 0 #fff; }
      </style><slot></slot>`;
  }
}

class FormRow extends HTMLElement {
  connectedCallback() {
    const a = n => this.getAttribute(n) || 0;
    this.attachShadow({ mode: 'open' }).innerHTML = `
      <style>
        :host { display: flex; align-items: center; flex: none; height: ${a('h')}px; margin-top: ${a('top')}px; padding-left: ${a('left')}px; margin-left: -1px; }
      </style><slot></slot>`;
  }
}

class OneField extends HTMLElement {
  connectedCallback() {
    const pics = {
      dots: '<span class="b">...</span>',
      wide: '<span class="b" style="width:17px;border:1px solid #d8d4c4;box-sizing:border-box">...</span>',
      search: `<span class="b">${svg(c(6.500, 6.500, 3.500, 'none', '#333', 1.300) + p('M9 9l4 4', 'none', '#333', 1.600), 12)}</span>`,
      x: `<span class="b">${svg(p('M4 4l8 8M12 4l-8 8', 'none', '#333', 1.400), 12)}</span>`,
      cal: `<span class="b">${svg(r(2, 2, 12, 12, '#444') + r(4, 6, 3, 2, '#eee') + r(9, 6, 3, 2, '#eee') + r(4, 10, 3, 2, '#eee') + r(9, 10, 3, 2, '#eee'), 12)}</span>`
    };
    const w = +this.getAttribute('w');
    const label = this.getAttribute('label');
    const btns = (this.getAttribute('btns') || '').split(',').filter(Boolean);
    this.attachShadow({ mode: 'open' }).innerHTML = `
      <style>
        :host { display: flex; align-items: center; flex: none; height: 16px; }
        .l { flex: none; color: #57534a; white-space: nowrap; }
        .i { box-sizing: border-box; height: 16px; background: #fff; border: 1px solid #d8d4c4; padding: 0 1px; line-height: 14px; font-size: 9.7px; white-space: pre; overflow: hidden; flex: none; color: #45413a; }
        .b { width: 13px; height: 16px; background: #e6e2d3; flex: none; display: flex; align-items: center; justify-content: center; color: #333; line-height: 12px; }
      </style>
      ${label ? `<span class="l" style="width:${this.getAttribute('lw')}px">${label}</span>` : ''}
      ${w ? `<span class="i" style="width:${w}px">${this.getAttribute('value') || ''}</span>` : ''}
      ${btns.map(b => pics[b]).join('')}`;
  }
}

class SectionHead extends HTMLElement {
  connectedCallback() {
    this.attachShadow({ mode: 'open' }).innerHTML = `
      <style>
        :host { display: block; flex: none; height: 14px; box-sizing: border-box; border-bottom: 1px solid #cfcab5; color: #87681a; font-size: 10.5px; font-weight: 700; line-height: 15px; margin-left: -1px; }
      </style>${this.getAttribute('text')}`;
  }
}

class FilterBlock extends HTMLElement {
  connectedCallback() {
    this.attachShadow({ mode: 'open' }).innerHTML = `
      <style>
        :host { display: grid; grid-template-columns: 442px 1fr; flex: none; height: 115px; padding-left: 5px; box-sizing: border-box; }
        .r { display: flex; flex-direction: column; }
      </style>
      <div><slot name="left"></slot></div>
      <div class="r"><slot name="right"></slot></div>`;
  }
}

class OneCheck extends HTMLElement {
  connectedCallback() {
    const on = this.hasAttribute('checked');
    const off = this.hasAttribute('disabled');
    this.attachShadow({ mode: 'open' }).innerHTML = `
      <style>
        :host { display: flex; align-items: center; flex: none; height: 16px; color: ${off ? '#a5a294' : '#57534a'}; gap: 1px; }
        .box { width: 13px; height: 13px; box-sizing: border-box; background: ${off ? '#f8f6ea' : '#fff'}; border: 1px solid ${off ? '#dcd9ca' : '#8e8c7e'}; border-radius: 2px; flex: none; }
      </style>
      <span class="box">${on ? svg(p('M2.500 6l2.500 2.500 4.500-5', 'none', '#222', 1.800), 11, 11) : ''}</span>
      <span>${this.getAttribute('label')}</span>`;
  }
}

class PriceKind extends HTMLElement {
  connectedCallback() {
    this.attachShadow({ mode: 'open' }).innerHTML = `
      <style>
        :host { display: block; width: 180px; height: 58px; margin-top: 10px; box-sizing: border-box; border: 3px double #cbc6b1; position: relative; padding: 6px 4px 0 3px; }
        .legend { position: absolute; left: 8px; top: -12px; background: #fdfbee; padding: 0 1px; color: #8b6a18; font: 700 13px "Liberation Sans", sans-serif; letter-spacing: 0; }
        .row { display: flex; height: 40px; }
        .btn { width: 157px; background: #e8e4d7; border: 1px solid #d5d1c0; border-radius: 2px; box-sizing: border-box; display: flex; align-items: center; padding-left: 2px; color: #4b473a; }
        .btn span { flex: 1; text-align: center; }
        .dd { width: 11px; box-sizing: border-box; border: 1px dotted #8a887a; background: #e8e4d7; position: relative; }
        .dd::after { content: ""; position: absolute; left: 2px; top: 18px; border: 3px solid transparent; border-top-color: #333; border-bottom: 0; }
      </style>
      <span class="legend">Вид ценника</span>
      <div class="row">
        <div class="btn">${svg(TB.pr2, 16)}<span>Выберите ценник!</span></div>
        <div class="dd"></div>
      </div>`;
  }
}

// columns: [title, width, align, cell class]
const GRIDS = {
  filter: {
    hot: 1,
    cols: [['', 20], ['Поле', 461], ['Тип сравнения', 276], ['Значение', 923]],
    rows: [[0, 'Номенклатура', 'Равно', ''], [0, 'Характеристика номенклатуры', 'Равно', ''], [1, 'Склад', 'Равно', 'Авиатор  г.Артем ЗВП']],
    sel: [2, 1]
  },
  goods: {
    hot: 0,
    cols: [['', 20], ['N', 52, 'r', 'num'], ['Артикул', 205, '', 'num'], ['Номенклатура', 379, '', 'tight'], ['Характеристика номенклатуры', 322], ['Ед. изм.', 97], ['Цена', 153, 'r', 'num'], ['Количество', 112, 'r', 'num'], ['Процент скидки наценки', 171], ['Цена без скидки', 169, 'r', 'num']],
    rows: [
      ['198718', '06-3308.04.003', '32 300,00'], ['100111650', '06-4332.04.007', '40 600,00'],
      ['100111425', '06-5332.04.003', '44 400,00'], ['0122929', '06-7339.04.003', '24 400,00'],
      ['0128686', 'SMWGA2100440', '23 300,00'], ['0144345', 'SMWGB2101001', '42 300,00'],
      ['0137371', 'SMWGC0000301', '44 500,00'], ['0144335', 'SMWGC2101701', '47 800,00'],
      ['0139982', 'SMWGH2200101', '25 600,00'], ['0140002', 'SMWGI0000404', '47 800,00']
    ].map((x, i) => [1, i + 1, x[0], 'Swiss Military ' + x[1], '', 'шт', x[2], 1, '', x[2]]),
    focus: 0
  }
};

class OneGrid extends HTMLElement {
  connectedCallback() {
    const g = GRIDS[this.getAttribute('src')];
    const tpl = g.cols.map(x => x[1] + 'px').join(' ');
    const head = g.cols.map((x, i) => `<div class="h ${i === 0 || i === g.hot ? 'hot' : ''}">${x[0]}</div>`).join('');
    const rows = g.rows.map((row, ri) => `<div class="row">` + row.map((v, i) => {
      if (i === 0) {
        const f = g.focus === ri;
        return `<div class="c ck ${f ? 'focus' : ''}"><span class="box">${v ? svg(p('M2.500 6l2.500 2.500 4.500-5', 'none', '#111', 1.800), 11, 11) : ''}</span></div>`;
      }
      const sel = g.sel && g.sel[0] === ri && g.sel[1] === i;
      return `<div class="c ${g.cols[i][2] === 'r' ? 'ra' : ''} ${g.cols[i][3] || ''} ${sel ? 'sel' : ''}">${v}</div>`;
    }).join('') + `</div>`).join('');
    this.attachShadow({ mode: 'open' }).innerHTML = `
      <style>
        :host { display: block; flex: none; height: ${this.getAttribute('h')}px; margin: 0 6px 0 7px; box-sizing: border-box; background: #fff; border: 1px solid #aaa690; border-top-color: #c9c5ae; overflow: hidden; color: #3a3a34; }
        .row, .head { display: grid; grid-template-columns: ${tpl}; }
        .head { height: 19px; }
        .row { height: 17px; }
        .h { background: #ebe7d6; color: #6c674f; padding: 0 3px; line-height: 18px; box-sizing: border-box; border-right: 1px solid #fdfbee; border-bottom: 1px solid #c9c5ae; white-space: nowrap; overflow: hidden; }
        .h.hot { background: #d3cfb9; }
        .c { box-sizing: border-box; border-right: 1px solid #c9c5ae; border-bottom: 1px solid #c9c5ae; padding: 0 3px; line-height: 16px; white-space: pre; overflow: hidden; }
        .ra { text-align: right; padding-right: 4px; }
        .num { font-size: 10.5px; letter-spacing: 0; }
        .tight { font-size: 10.5px; letter-spacing: -.48px; }
        .sel { background: #4a66b8; color: #d8e2f5; }
        .ck { padding: 1px 0 0 3px; background: #fff; }
        .box { display: block; width: 13px; height: 13px; box-sizing: border-box; border: 1px solid #b5b3a4; border-radius: 2px; background: #fff; }
        .focus { background: #4a66b8; }
      </style>
      <div class="head">${head}</div>${rows}`;
  }
}

class GridSplit extends HTMLElement {
  connectedCallback() {
    this.attachShadow({ mode: 'open' }).innerHTML = `
      <style>:host { display: block; flex: none; height: 5px; margin: 0 6px 0 7px; box-sizing: border-box; background: #ebe7d6; border-bottom: 1px solid #b9b59f; }</style>`;
  }
}

class FormFooter extends HTMLElement {
  connectedCallback() {
    this.attachShadow({ mode: 'open' }).innerHTML = `
      <style>
        :host { display: flex; justify-content: flex-end; flex: none; height: 22px; margin-top: 6px; background: #ebe7d9; border-top: 1px solid #dcd8c6; box-sizing: border-box; }
        span { width: 51px; box-sizing: border-box; border-left: 1px solid #d2cebd; padding-left: 6px; line-height: 18px; color: #55513f; }
      </style><span>Закрыть</span>`;
  }
}

class OneDock extends HTMLElement {
  connectedCallback() {
    const docIc = r(3, 1.5, 10, 13, '#e8f0f8', '#8aa4bc') + p('M5 5h6M5 8h6M5 11h6', 'none', '#9db4c8');
    const proc = r(4, 7, 8, 8, '#dde6ee', '#345') + p('M8 8v5M6 11l2 2 2-2', 'none', '#2a5fb0') + c(11, 4, 2.500, '#f6d23c');
    const msg = r(1, 2, 12, 12, '#dfe6ee', '#7a8ea3') + p('M3 5h7M3 8h7M3 11h5', 'none', '#7a8ea3') + `<text x="13" y="14" font-size="12" font-weight="700" font-style="italic" text-anchor="middle" fill="#2a4a8a" font-family="Liberation Serif">i</text>`;
    this.attachShadow({ mode: 'open' }).innerHTML = `
      <style>
        :host { display: block; height: 62px; box-sizing: border-box; background: #ebe7d9; border-top: 1px solid #f6f3e6; padding-top: 1px; color: #4b473a; }
        .svc { display: inline-flex; align-items: center; width: 125px; height: 20px; box-sizing: border-box; border: 1px solid #cfcbb8; padding-left: 2px; gap: 1px; white-space: nowrap; font-size: 9.9px; vertical-align: top; }
        .tabs { display: flex; margin-top: 2px; gap: 1px; height: 19px; padding-left: 1px; }
        .tab { width: 152px; box-sizing: border-box; background: #c5c5bd; display: flex; align-items: center; padding-left: 1px; gap: 1px; white-space: pre; overflow: hidden; }
        .tab:nth-child(2) { padding-left: 3px; gap: 3px; }
        .tab.on { background: #b8d0e4; }
        .status { display: flex; height: 18px; margin-top: 1px; border-top: 1px solid #dcd8c6; box-sizing: border-box; align-items: center; padding: 0 3px 0 2px; }
        .status .msg { flex: 1; }
        .status .k { width: 28px; text-align: center; border-left: 1px solid #d4d0be; line-height: 17px; margin-left: 2px; }
        .off { color: #a5a190; }
      </style>
      <div class="svc">${svg(msg, 15)}<span>Служебные сообщения</span></div>
      <div class="tabs">
        <div class="tab">${svg(docIc, 14)}<span>Переоценки товаров в роз...</span></div>
        <div class="tab">${svg(docIc, 14)}<span>...: переоценка в рознице, ...</span></div>
        <div class="tab on">${svg(proc, 14)}<span>Обработка   Печать ценников</span></div>
      </div>
      <div class="status">
        <span class="msg">Для получения подсказки нажмите F1</span>
        <span class="k off">CAP</span><span class="k">NUM</span>
      </div>`;
  }
}

class WinTaskbar extends HTMLElement {
  connectedCallback() {
    const rdp = c(12, 12, 3.500, '#eee') + p('M10.500 13.500l3-3M10.500 10.500l3 3', 'none', '#2a9a4a', 1.200);
    const chrome = c(8, 8, 7, '#e8b32c') + p('M8 8 2 4.500A7 7 0 0 1 14 4.500z', '#dc4437') + p('M8 8 2 4.500A7 7 0 0 0 8 15z', '#3aa853') + c(8, 8, 3.200, '#4a89dc', '#fff');
    const items = [
      r(2, 2, 5.500, 5.500, '#fff') + r(8.500, 2, 5.500, 5.500, '#fff') + r(2, 8.500, 5.500, 5.500, '#fff') + r(8.500, 8.500, 5.500, 5.500, '#fff'),
      c(9.500, 6.500, 4.500, 'none', '#e8e8e8', 1) + p('M6 10l-4 4', 'none', '#e8e8e8', 1.300),
      r(3, 4, 8, 8, 'none', '#e0e0e0') + p('M2 2h10M2 14h10M14 2v12', 'none', '#e0e0e0'),
      r(1, 4, 14, 10, '#f2c14e') + r(1, 2, 6, 3, '#e8a92e') + r(5, 9, 6, 5, '#2a7ab8'),
      chrome,
      c(8, 8, 7, '#1b8fd0') + p('M2 9c1-5 11-7 12-1 0 2-2 3-4 3 1-4-6-5-8-2z', '#3fd08c'),
      chrome + c(12, 12, 3.500, '#7a6a68'),
      r(6, 2, 9, 12, '#1f7a44') + r(1, 3, 9, 10, '#0e5c30') + p('M3.500 5.500l4 5M7.500 5.500l-4 5', 'none', '#fff', 1.200) + p('M11 5h3M11 8h3M11 11h3', 'none', '#cfe8d8'),
      r(6, 2, 9, 12, '#d8e4f4') + r(1, 3, 9, 10, '#2a5caa') + p('M3 6l1 4 1.500-3 1.500 3 1-4', 'none', '#fff', .8),
      p('M2 4h5l1 1h5v8H2z', '#f0c860') + rdp,
      r(1, 1, 14, 14, '#111') + p('M1 1h14v14H1z', 'none', '#21d07a', 1.500) + `<text x="7.500" y="9" font-size="6.500" font-weight="700" text-anchor="middle" fill="#fff" font-family="Liberation Sans">PC</text>` + r(3.500, 11, 5, 1, '#fff'),
      c(7.500, 7.500, 6.500, '#f2a33a') + `<text x="7.500" y="10" font-size="7.500" font-weight="700" text-anchor="middle" fill="#c8261e" font-family="Liberation Sans">1С</text>` + rdp
    ];
    const marks = new Set([3, 6, 7, 8, 9, 10, 11]);
    const cells = items.map((it, i) => `<span class="t ${i === 0 ? 'first' : ''} ${i === 11 ? 'on' : ''} ${marks.has(i) ? 'run' : ''}">${svg(it, 22)}</span>`).join('');
    this.attachShadow({ mode: 'open' }).innerHTML = `
      <style>
        :host { display: flex; height: 35px; background: #1a2b3f; color: #e8ecef; flex: none; box-shadow: inset -3px 0 #2a4a62; letter-spacing: 0; }
        .t { width: 44px; display: flex; justify-content: center; align-items: center; flex: none; position: relative; }
        .first { width: 40px; }
        .on { background: #46525e; }
        .run::after { content: ""; position: absolute; left: 4px; right: 4px; bottom: 0; height: 2px; background: #8ab8d8; }
        .tray { margin-left: auto; display: flex; align-items: center; padding-right: 14px; }
        .tray > span { display: flex; justify-content: center; flex: none; text-align: center; }
        .clock { font-size: 12px; line-height: 16px; flex-direction: column; }
        .eng { font-size: 12px; }
        .note { position: relative; }
        .num { position: absolute; left: 15px; top: 6px; width: 13px; height: 13px; line-height: 12px; border: 1px solid #9aa; border-radius: 50%; background: #2c3a4a; font-size: 10px; font-weight: 700; }
      </style>
      ${cells}
      <div class="tray">
        <span style="width:22px">${svg(p('M3 11l5-5 5 5', 'none', '#e8ecef', 1.300), 16)}</span>
        <span style="width:21px">${svg(r(3, 4, 8, 8, 'none', '#e8ecef', 1) + p('M11 7l3-1v4l-3-1M5 2h4M5 14h4', 'none', '#e8ecef'), 16)}</span>
        <span style="width:24px">${svg(p('M2 12a10 10 0 0 1 11-8M5 12a7 7 0 0 1 8-5M8 13a4 4 0 0 1 5-3', 'none', '#aab', 1.200) + c(12, 13, 1.500, '#fff'), 16)}</span>
        <span class="eng" style="width:26px">ENG</span>
        <span class="clock" style="width:66px"><span>15:00</span><span>24.09.2023</span></span>
        <span class="note" style="width:30px">${svg(r(1, 2, 14, 10, '#f2f2f2') + p('M3 5h10M3 8h10', 'none', '#445') + p('M4 12v3l3-3z', '#f2f2f2'), 16)}<span class="num">3</span></span>
      </div>`;
  }
}

class MouseCursor extends HTMLElement {
  connectedCallback() {
    this.attachShadow({ mode: 'open' }).innerHTML = `
      <style>:host { position: absolute; left: 318px; top: 462px; }</style>
      ${svg(p('M2 1v14l3.500-3.200 2.500 5.200 2.500-1.200-2.500-5h4.500z', '#222', '#fff', 1), 20, 20)}`;
  }
}

class SessionHandle extends HTMLElement {
  connectedCallback() {
    this.attachShadow({ mode: 'open' }).innerHTML = `
      <style>:host { position: absolute; left: 1900px; top: 540px; width: 38px; height: 38px; border-radius: 50%; background: #e6e6e6; }</style>`;
  }
}

const defs = {
  'browser-tabs': BrowserTabs, 'browser-bar': BrowserBar, 'remote-screen': RemoteScreen, 'one-app': OneApp,
  'window-title': WindowTitle, 'one-menubar': OneMenubar, 'one-toolbar': OneToolbar, 'sub-title': SubTitle,
  'actions-bar': ActionsBar, 'price-form': PriceForm, 'form-row': FormRow, 'one-field': OneField,
  'section-head': SectionHead, 'filter-block': FilterBlock, 'one-check': OneCheck, 'price-kind': PriceKind,
  'one-grid': OneGrid, 'grid-split': GridSplit, 'form-footer': FormFooter, 'one-dock': OneDock,
  'win-taskbar': WinTaskbar, 'mouse-cursor': MouseCursor, 'session-handle': SessionHandle
};
Object.entries(defs).forEach(([name, cls]) => customElements.define(name, cls));
</script>
</body>
</html>
